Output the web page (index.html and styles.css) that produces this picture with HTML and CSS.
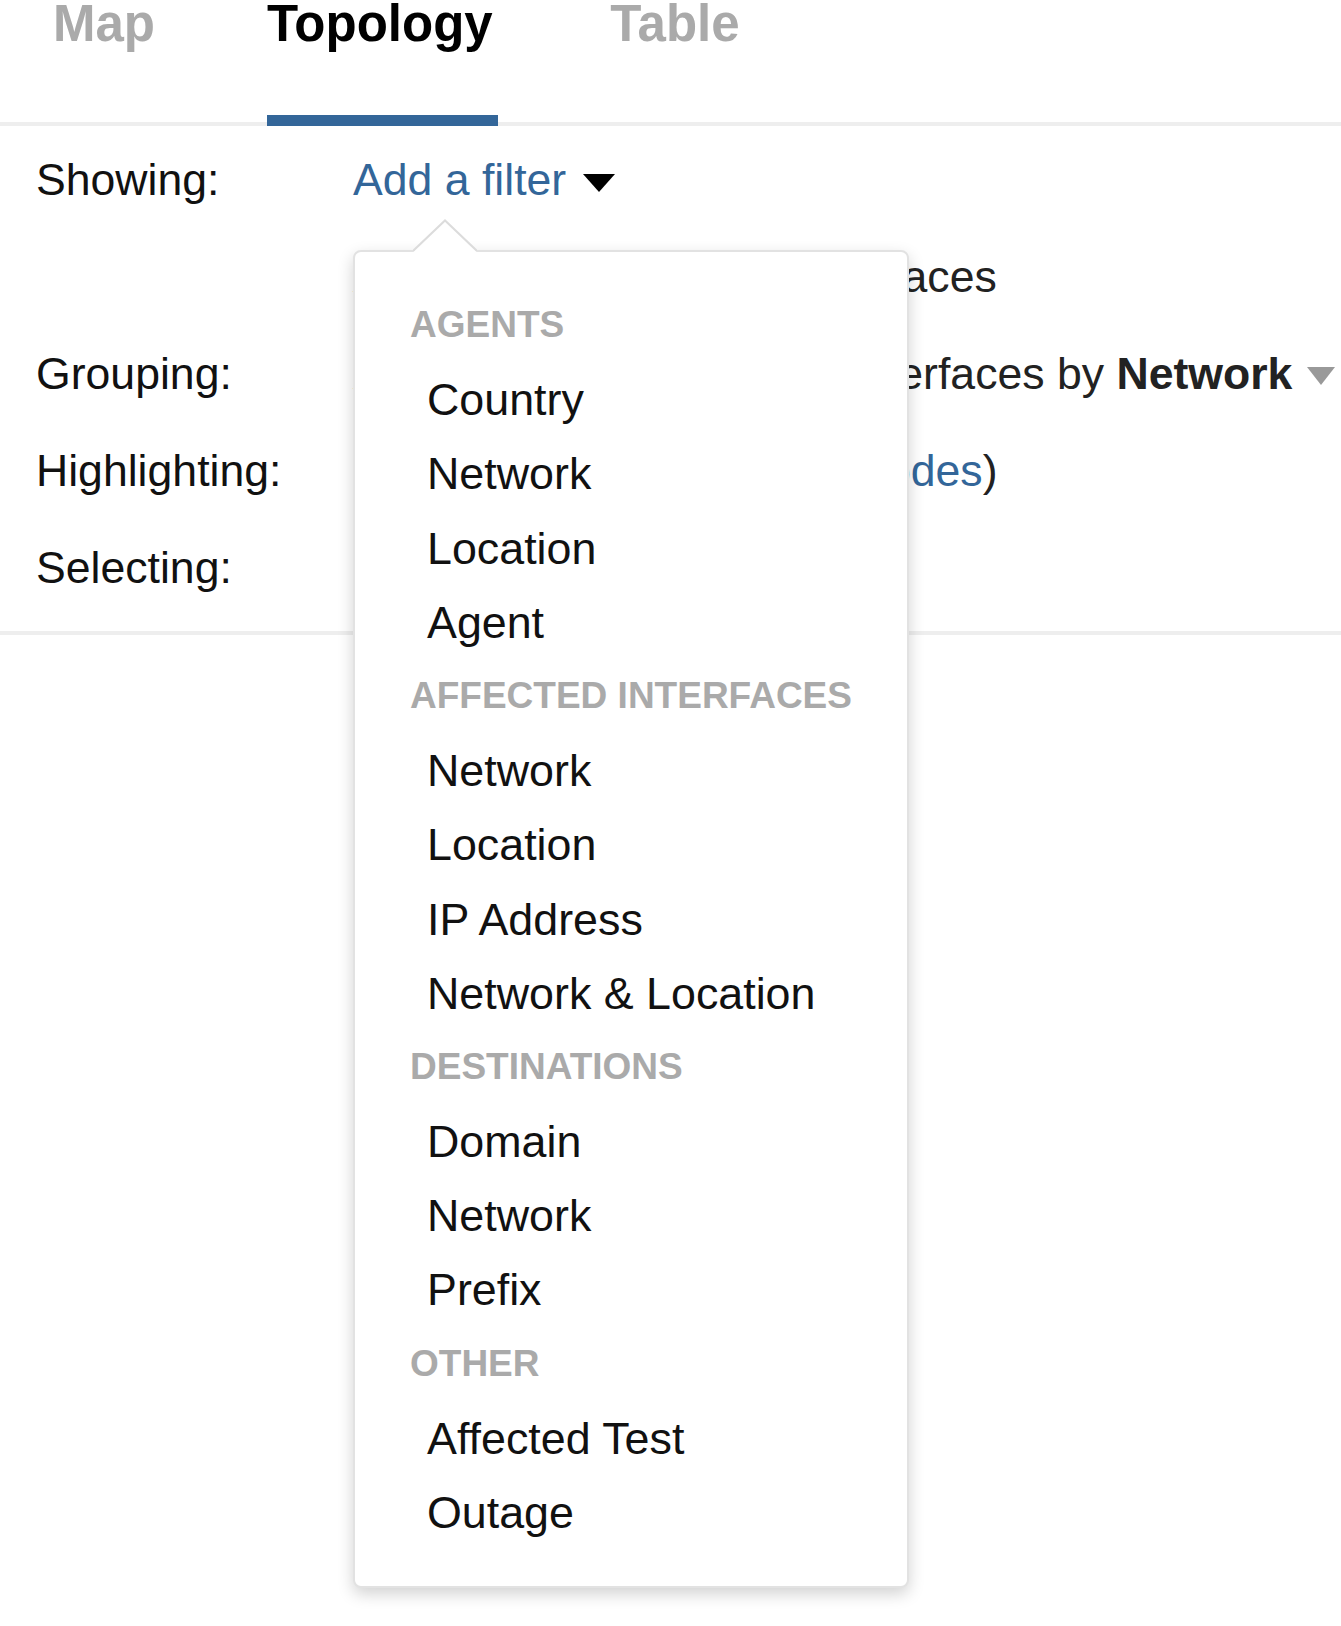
FILE: index.html
```html
<!DOCTYPE html>
<html>
<head>
<meta charset="utf-8">
<link rel="stylesheet" href="styles.css">
</head>
<body>
<div class="page">
  <nav class="tabs">
    <a class="tab">Map</a>
    <a class="tab active">Topology</a>
    <a class="tab">Table</a>
  </nav>
  <div class="settings">
    <div class="row">
      <div class="label">Showing:</div>
      <div class="value"><a class="link">Add a filter</a><span class="caret"></span></div>
    </div>
    <div class="row">
      <div class="label"></div>
      <div class="value">Agents and 5 Affected Interfaces</div>
    </div>
    <div class="row">
      <div class="label">Grouping:</div>
      <div class="value">Agents by <b>Location</b> and Interfaces by <b>Network</b><span class="caret caret-gray"></span></div>
    </div>
    <div class="row">
      <div class="label">Highlighting:</div>
      <div class="value">Nothing (<a class="link">click to highlight nodes</a>)</div>
    </div>
    <div class="row">
      <div class="label">Selecting:</div>
      <div class="value">Nothing</div>
    </div>
  </div>

  <div class="dropdown">
    <svg class="dropdown-arrow" width="64" height="33" viewBox="0 0 64 33">
      <polygon points="0,33 32,1.5 64,33" fill="#fff"/>
      <polyline points="0,32 32,1.5 64,32" fill="none" stroke="#dcdcdc" stroke-width="2"/>
    </svg>
    <div class="group-title">Agents</div>
    <div class="item">Country</div>
    <div class="item">Network</div>
    <div class="item">Location</div>
    <div class="item">Agent</div>
    <div class="group-title">Affected Interfaces</div>
    <div class="item">Network</div>
    <div class="item">Location</div>
    <div class="item">IP Address</div>
    <div class="item">Network &amp; Location</div>
    <div class="group-title">Destinations</div>
    <div class="item">Domain</div>
    <div class="item">Network</div>
    <div class="item">Prefix</div>
    <div class="group-title">Other</div>
    <div class="item">Affected Test</div>
    <div class="item">Outage</div>
  </div>
</div>
</body>
</html>
```

FILE: styles.css
```css
html, body {
  margin: 0;
  padding: 0;
  background: #fff;
}

body {
  font-family: "Liberation Sans", Arial, Helvetica, sans-serif;
  color: #1a1a1a;
}

.page {
  position: relative;
  min-height: 1626px;
}

.tabs {
  display: flex;
  padding-left: 53px;
  border-bottom: 4px solid #eeeeee;
  height: 122px;
}

.tab {
  display: block;
  font-size: 51px;
  font-weight: bold;
  line-height: 48px;
  color: #aaaaaa;
  padding-bottom: 67px;
  margin-right: 112px;
  margin-bottom: -4px;
  border-bottom: 11px solid transparent;
  cursor: pointer;
}

.tab.active {
  color: #000;
  border-bottom-color: #336699;
  padding-right: 5px;
  margin-right: 112.5px;
}

.settings {
  padding: 5px 0 15px 0;
  border-bottom: 4px solid #eeeeee;
}

.row {
  display: flex;
  font-size: 44.6px;
  line-height: 97px;
  height: 97px;
  white-space: nowrap;
}

.label {
  width: 317px;
  padding-left: 36px;
  color: #111;
  flex: none;
}

.value {
  color: #222;
}

.value b {
  color: #222;
}

.link {
  color: #336699;
  cursor: pointer;
}

.caret {
  display: inline-block;
  width: 0;
  height: 0;
  border-left: 16px solid transparent;
  border-right: 16px solid transparent;
  border-top: 18px solid #000;
  margin-left: 17px;
  vertical-align: 3px;
}

.caret-gray {
  border-left-width: 14px;
  border-right-width: 14px;
  border-top-color: #999;
  margin-left: 15px;
  vertical-align: 4px;
}

.dropdown {
  position: absolute;
  left: 353px;
  top: 250px;
  width: 552px;
  padding: 36px 0 36.6px 0;
  background: #fff;
  border: 2px solid #e2e2e2;
  border-radius: 8px;
  box-shadow: 0 6px 16px rgba(0, 0, 0, 0.18);
}

.dropdown-arrow {
  position: absolute;
  left: 58px;
  top: -33px;
  display: block;
}

.group-title {
  height: 74.2px;
  line-height: 74px;
  font-size: 37px;
  font-weight: bold;
  text-transform: uppercase;
  color: #aaaaaa;
  padding-left: 55px;
  white-space: nowrap;
}

.item {
  height: 74.2px;
  line-height: 74px;
  font-size: 44.8px;
  color: #111;
  padding-left: 72px;
  white-space: nowrap;
  cursor: pointer;
}
```
